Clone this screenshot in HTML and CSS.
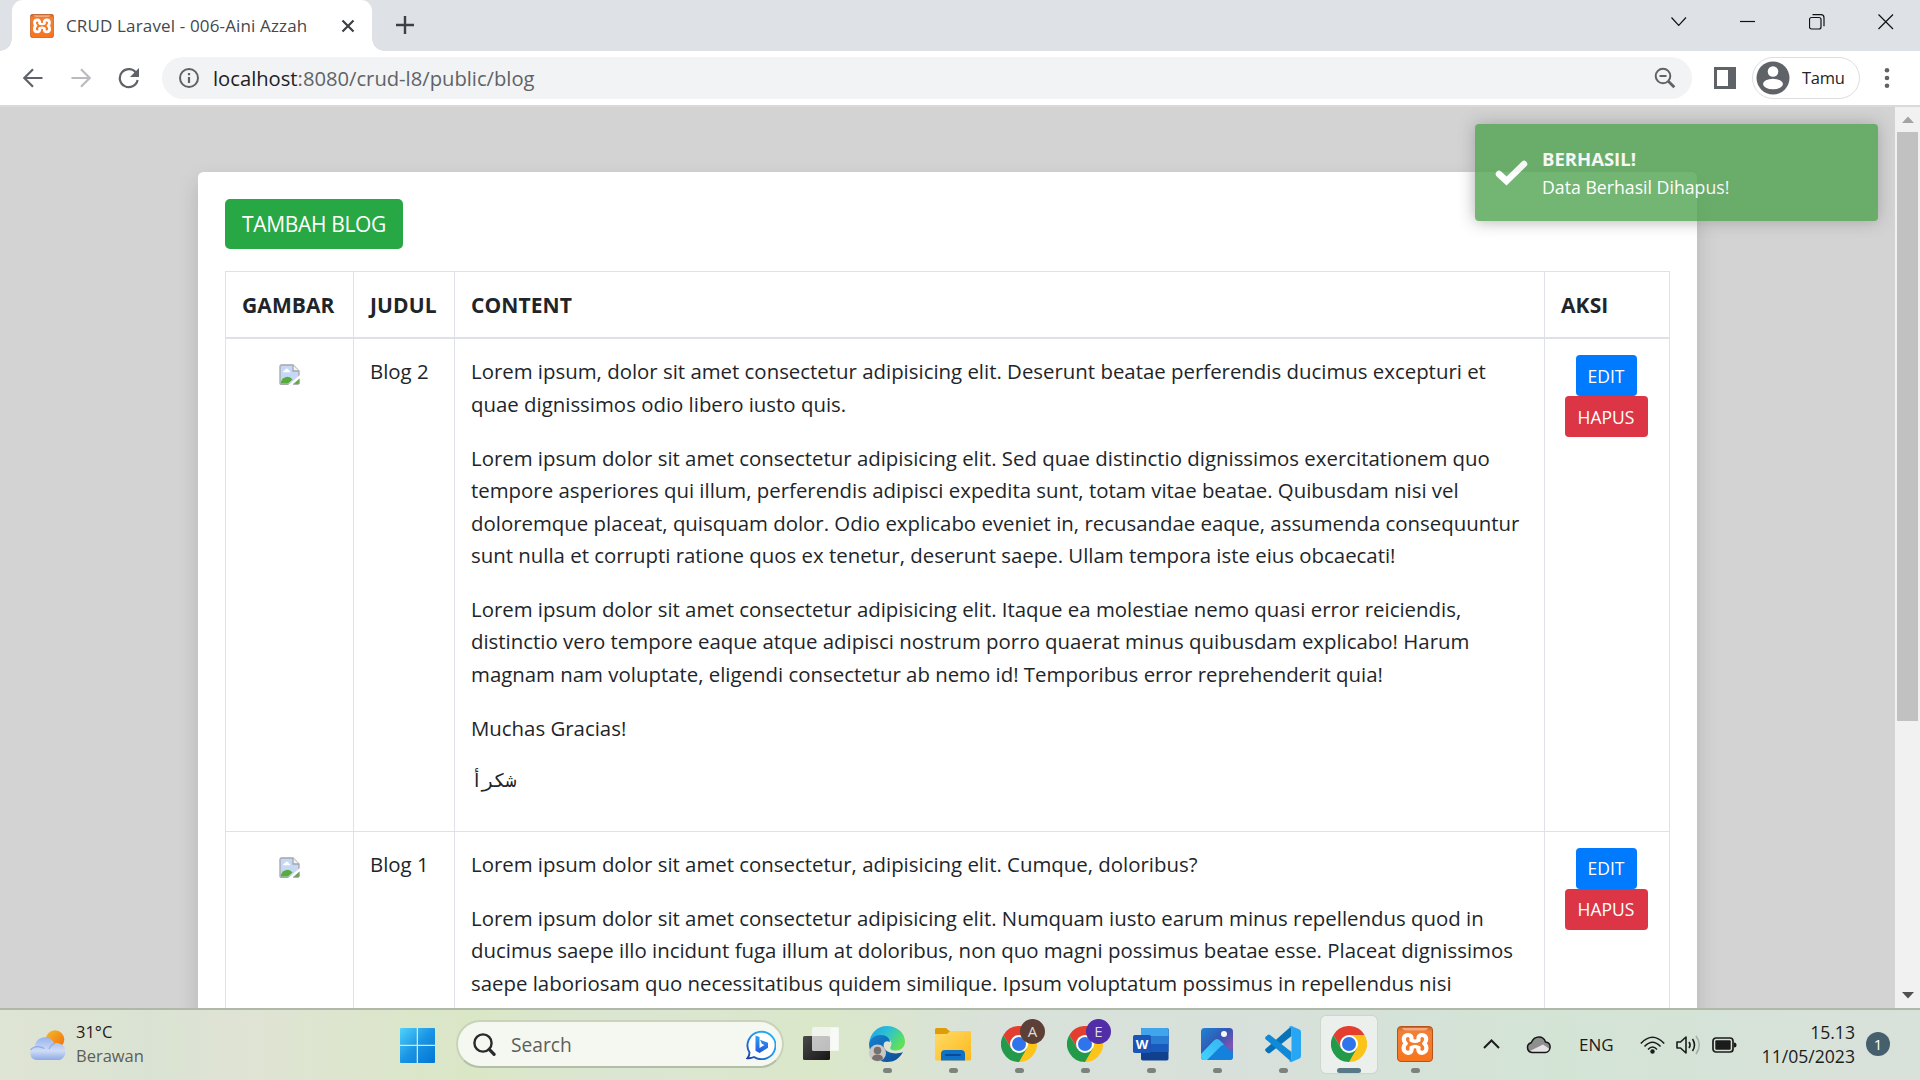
FILE: index.html
```html
<!DOCTYPE html>
<html lang="id">
<head>
<meta charset="utf-8">
<title>CRUD Laravel - 006-Aini Azzah</title>
<link rel="stylesheet" href="styles.css">
</head>
<body>
<svg class="defs" aria-hidden="true">
  <defs>
    <linearGradient id="orange" x1="0" y1="0" x2="0" y2="1"><stop offset="0" stop-color="#c8622a"/><stop offset=".15" stop-color="#f08039"/><stop offset="1" stop-color="#f9741c"/></linearGradient>
    <linearGradient id="win" x1="0" y1="0" x2="1" y2="1"><stop offset="0" stop-color="#4fd3fc"/><stop offset=".5" stop-color="#1a94e4"/><stop offset="1" stop-color="#0076d6"/></linearGradient>
    <linearGradient id="sun" x1="0" y1="0" x2="1" y2="1"><stop offset="0" stop-color="#f5bb2c"/><stop offset="1" stop-color="#f26a0c"/></linearGradient>
    <linearGradient id="cloud" x1="0" y1="0" x2="0" y2="1"><stop offset="0" stop-color="#96b4ee"/><stop offset=".6" stop-color="#cfdcf4"/><stop offset="1" stop-color="#8caae8"/></linearGradient>
    <linearGradient id="bing" x1="1" y1="0" x2="0" y2="1"><stop offset="0" stop-color="#1fb6f2"/><stop offset=".5" stop-color="#2490ee"/><stop offset="1" stop-color="#173ca8"/></linearGradient>
    <linearGradient id="bingB" x1="0" y1="0" x2="0" y2="1"><stop offset="0" stop-color="#2fa5f5"/><stop offset="1" stop-color="#2258dc"/></linearGradient>
    <linearGradient id="dark" x1="0" y1="0" x2="1" y2="1"><stop offset="0" stop-color="#4a4a4a"/><stop offset="1" stop-color="#161616"/></linearGradient>
    <linearGradient id="edgeTop" x1="0" y1="0" x2="1" y2=".5"><stop offset="0" stop-color="#1b9de2"/><stop offset=".5" stop-color="#2cc0d6"/><stop offset="1" stop-color="#5fe05a"/></linearGradient>
    <linearGradient id="edgeLow" x1="0" y1="0" x2="1" y2="1"><stop offset="0" stop-color="#1482d0"/><stop offset="1" stop-color="#0e4b93"/></linearGradient>
    <linearGradient id="folder" x1="0" y1="0" x2="1" y2="1"><stop offset="0" stop-color="#ffdb67"/><stop offset="1" stop-color="#fdb81a"/></linearGradient>
    <linearGradient id="photo" x1="0" y1="0" x2="1" y2="1"><stop offset="0" stop-color="#1d84d8"/><stop offset=".45" stop-color="#3457b0"/><stop offset=".75" stop-color="#8252b4"/><stop offset="1" stop-color="#1c6fc8"/></linearGradient>
    <linearGradient id="hill" x1="1" y1="0" x2="0" y2="1"><stop offset="0" stop-color="#36b3f2"/><stop offset="1" stop-color="#43d4fc"/></linearGradient>
    <symbol id="xampp" viewBox="0 0 36 36">
      <rect x=".5" y=".5" width="35" height="35" rx="3.500" fill="url(#orange)" stroke="#b4541c"/>
      <path d="M5 2h26q-1 2.600-4 2.600h-18q-3 0-4-2.600z" fill="#f7a878"/>
      <g fill="none" stroke="#fff" stroke-width="4.200" stroke-linecap="round" stroke-linejoin="round">
        <path d="M14.500 14c.8-3-1-5-3.500-5s-4.200 2-4.200 4.300c0 2 .8 3.200 2 4.200-1.400 1.200-2.200 2.500-2.200 4.500 0 2.800 1.800 4.800 4.400 4.800 2.800 0 4.200-2 3.500-5"/>
        <path d="M21.500 14c-.8-3 1-5 3.500-5s4.200 2 4.200 4.300c0 2-.8 3.200-2 4.200 1.400 1.200 2.200 2.500 2.200 4.500 0 2.800-1.800 4.800-4.400 4.800-2.800 0-4.200-2-3.500-5"/>
        <path d="M14.500 14q3.500 2.500 7 0M14.500 21.800q3.500-2.500 7 0"  stroke-width="3.400"/>
      </g>
    </symbol>
    <symbol id="chrome" viewBox="0 0 36 36">
      <path d="M18 18V9h15.600A18 18 0 0 1 18 36z" fill="#fcc419"/>
      <path d="M18 9h15.600a18 18 0 0 0-31.200 0L10.200 22.500z" fill="#e43e2f"/>
      <path d="M10.200 22.500L2.400 9A18 18 0 0 0 18 36l7.800-13.500z" fill="#23994a"/>
      <circle cx="18" cy="18" r="9" fill="#fff"/><circle cx="18" cy="18" r="7" fill="#2f74ea"/>
    </symbol>
    <symbol id="broken" viewBox="0 0 21 21">
      <path d="M2.500 1h11.500l6 6v6.500L10 20.400H2.500q-1.500 0-1.500-1.500V2.500q0-1.500 1.500-1.500z" fill="#c6d8f5" stroke="#a4a6a8" stroke-width="1.300"/>
      <path d="M14 1v6h6" fill="#f4f4f4" stroke="#a4a6a8" stroke-width="1.300"/>
      <path d="M4 8.200q0-2 2-2 .6-2 2.400-1.500Q10 5.200 9.800 6.600q1.500 0 1.500 1.600z" fill="#fff"/>
      <path d="M1.800 19.600q0-4.600 4.600-6.400 4.400-1.400 7.200 2.400L9 19.600z" fill="#58ac3c"/>
      <path d="M20.900 11L9 21h4l8-6.800z" fill="#fff"/>
      <path d="M20.300 15v4q0 1.300-1.300 1.300h-4.800z" fill="#58ac3c" stroke="#a4a6a8"/>
    </symbol>
  </defs>
</svg>

<header class="tabstrip">
  <div class="tab">
    <svg class="favicon" width="24" height="24"><use href="#xampp"/></svg>
    <span class="tab-title">CRUD Laravel - 006-Aini Azzah</span>
    <svg class="tab-close" width="14" height="14" viewBox="0 0 14 14"><path d="M1.500 1.500l11 11M12.500 1.500l-11 11" stroke="#3c4043" stroke-width="2.200"/></svg>
  </div>
  <svg class="newtab" width="18" height="18" viewBox="0 0 18 18"><path d="M9 0v18M0 9h18" stroke="#3c4043" stroke-width="2.400"/></svg>
  <div class="window-controls">
    <svg width="16" height="16" viewBox="0 0 16 16"><path d="M.5 3.500l7.200 7.800L15 3.500"/></svg>
    <svg width="16" height="16" viewBox="0 0 16 16"><path d="M0 7.500h15"/></svg>
    <svg width="16" height="16" viewBox="0 0 16 16"><rect x=".5" y="3.500" width="11.500" height="11.500" rx="2"/><path d="M3.500.7h8.500q3 0 3 3v8.500"/></svg>
    <svg width="16" height="16" viewBox="0 0 16 16"><path d="M.5.5l14.500 14.500M15 .5L.5 15"/></svg>
  </div>
</header>

<nav class="toolbar">
  <svg class="nav-icon" width="22" height="22" viewBox="0 0 22 22"><path d="M20.500 11H3M11 2.300L2.300 11l8.700 8.700" stroke="#5f6368"/></svg>
  <svg class="nav-icon" width="22" height="22" viewBox="0 0 22 22"><path d="M1.500 11H19M11 2.300l8.700 8.700-8.700 8.700" stroke="#b9bbbe"/></svg>
  <svg class="nav-icon reload" width="22" height="22" viewBox="0 0 22 22"><path d="M18.400 6.300A9 9 0 1 0 19.600 13" stroke="#5f6368"/><path d="M21 1v9h-9z" fill="#5f6368"/></svg>
  <div class="address">
    <svg width="22" height="22" viewBox="0 0 22 22"><circle cx="11" cy="11" r="9" fill="none" stroke="#5f6368" stroke-width="2"/><path d="M11 10v6M11 6v2.200" stroke="#5f6368" stroke-width="2.200"/></svg>
    <span class="url"><b>localhost</b>:8080/crud-l8/public/blog</span>
    <svg class="zoom-out" width="22" height="22" viewBox="0 0 22 22"><g fill="none" stroke="#5f6368" stroke-width="2"><circle cx="9" cy="9" r="7.300"/><path d="M5.500 9h7"/><path d="M14.300 14.300l6 6" stroke-width="2.800"/></g></svg>
  </div>
  <svg class="sidepanel" width="22" height="22" viewBox="0 0 22 22"><path fill="#5f6368" fill-rule="evenodd" d="M0 0h22v22H0zM3 3v16h11V3z"/></svg>
  <div class="profile">
    <svg width="34" height="34" viewBox="0 0 34 34"><circle cx="17" cy="17" r="16.500" fill="#5f6368"/><circle cx="17" cy="10.500" r="5.300" fill="#fff"/><ellipse cx="17" cy="23" rx="10" ry="5.300" fill="#fff"/></svg>
    <span>Tamu</span>
  </div>
  <svg class="menu" width="6" height="22" viewBox="0 0 6 22" fill="#5f6368"><circle cx="3" cy="3.300" r="2.300"/><circle cx="3" cy="11" r="2.300"/><circle cx="3" cy="18.700" r="2.300"/></svg>
</nav>

<div class="viewport">
  <main class="page">
    <section class="card">
      <a class="btn btn-add">TAMBAH BLOG</a>
      <table class="posts">
        <colgroup><col class="c-img"><col class="c-title"><col class="c-content"><col class="c-act"></colgroup>
        <thead><tr><th>GAMBAR</th><th>JUDUL</th><th>CONTENT</th><th>AKSI</th></tr></thead>
        <tbody>
          <tr>
            <td class="center"><svg class="thumb" width="21" height="21"><use href="#broken"/></svg></td>
            <td>Blog 2</td>
            <td>
              <p>Lorem ipsum, dolor sit amet consectetur adipisicing elit. Deserunt beatae perferendis ducimus excepturi et<br>quae dignissimos odio libero iusto quis.</p>
              <p>Lorem ipsum dolor sit amet consectetur adipisicing elit. Sed quae distinctio dignissimos exercitationem quo<br>tempore asperiores qui illum, perferendis adipisci expedita sunt, totam vitae beatae. Quibusdam nisi vel<br>doloremque placeat, quisquam dolor. Odio explicabo eveniet in, recusandae eaque, assumenda consequuntur<br>sunt nulla et corrupti ratione quos ex tenetur, deserunt saepe. Ullam tempora iste eius obcaecati!</p>
              <p>Lorem ipsum dolor sit amet consectetur adipisicing elit. Itaque ea molestiae nemo quasi error reiciendis,<br>distinctio vero tempore eaque atque adipisci nostrum porro quaerat minus quibusdam explicabo! Harum<br>magnam nam voluptate, eligendi consectetur ab nemo id! Temporibus error reprehenderit quia!</p>
              <p>Muchas Gracias!</p>
              <pre lang="ar">شكرأ</pre>
            </td>
            <td class="center actions"><a class="btn btn-edit">EDIT</a><br><a class="btn btn-delete">HAPUS</a></td>
          </tr>
          <tr>
            <td class="center"><svg class="thumb" width="21" height="21"><use href="#broken"/></svg></td>
            <td>Blog 1</td>
            <td>
              <p>Lorem ipsum dolor sit amet consectetur, adipisicing elit. Cumque, doloribus?</p>
              <p>Lorem ipsum dolor sit amet consectetur adipisicing elit. Numquam iusto earum minus repellendus quod in<br>ducimus saepe illo incidunt fuga illum at doloribus, non quo magni possimus beatae esse. Placeat dignissimos<br>saepe laboriosam quo necessitatibus quidem similique. Ipsum voluptatum possimus in repellendus nisi</p>
            </td>
            <td class="center actions"><a class="btn btn-edit">EDIT</a><br><a class="btn btn-delete">HAPUS</a></td>
          </tr>
        </tbody>
      </table>
    </section>
    <aside class="toast">
      <svg width="33" height="26" viewBox="0 0 33 26"><path d="M4 14l7.500 7L29 4" fill="none" stroke="#fff" stroke-width="6.500" stroke-linecap="round"/></svg>
      <div><strong>BERHASIL!</strong><span>Data Berhasil Dihapus!</span></div>
    </aside>
  </main>
  <div class="scrollbar">
    <svg width="12" height="7" viewBox="0 0 12 7"><path d="M0 7l6-6.500L12 7z" fill="#a3a3a3"/></svg>
    <div class="thumb-bar"></div>
    <svg class="down" width="12" height="7" viewBox="0 0 12 7"><path d="M0 0l6 6.500L12 0z" fill="#505050"/></svg>
  </div>
</div>

<footer class="taskbar">
  <div class="weather">
    <svg width="37" height="31" viewBox="0 0 37 31"><circle cx="26" cy="9.500" r="9.300" fill="url(#sun)"/><path d="M7 30a7 7 0 0 1-1-13.500C6 11 10.500 7.200 16 7.200c4 0 7.500 2 9 6 6-1.500 11.500 2.500 11.500 8.500 0 4.500-3 8.300-7.500 8.300z" fill="url(#cloud)"/><path d="M1.500 20q5-6 14-1.500M20 19q2-4.500 6-5.500" fill="none" stroke="#7698e4" stroke-width="1.200" opacity=".7"/></svg>
    <div><span>31°C</span><span class="muted">Berawan</span></div>
  </div>
  <svg class="start" width="35" height="35" viewBox="0 0 35 35"><path d="M0 1q0-1 1-1h15.700v16.700H0zM18 0h16q1 0 1 1v15.700H18zM0 18h16.700v17H1q-1 0-1-1zM18 18h17v16q0 1-1 1H18z" fill="url(#win)"/></svg>
  <div class="search">
    <svg width="23" height="23" viewBox="0 0 23 23"><g fill="none" stroke="#2a2a2a" stroke-linecap="round"><circle cx="10" cy="10" r="8.600" stroke-width="2.400"/><path d="M16.300 16.300l4.800 5" stroke-width="3.200"/></g></svg>
    <span>Search</span>
    <svg class="bing" width="30" height="31" viewBox="0 0 30 31"><path d="M3.500 23.500A14 13.700 0 1 1 8 28q-3 1.500-6.500 1.200 2-2 2-5.700z" fill="#fff" stroke="url(#bing)" stroke-width="1.900"/><path d="M9.500 6.500l4 1.500v11l5-3-2.700-1.200-1.800-4 8 2.900v5L13.500 24l-4-2.200z" fill="url(#bingB)"/></svg>
  </div>
  <div class="apps">
    <div class="app"><svg width="36" height="36" viewBox="0 0 36 36"><rect y="10" width="27" height="24" rx="1.500" fill="url(#dark)"/><rect x="9" y="1" width="27" height="24" rx="1.500" fill="#fafafa" opacity=".72"/><rect x="27.500" y="1.500" width="8" height="23" fill="#fff" opacity=".5"/></svg></div>
    <div class="app run"><svg width="36" height="36" viewBox="0 0 36 36"><path d="M0 18C1 7 8.500 0 18 0c10 0 18 7 18 15.500 0 6-4.500 9-9.500 9-4 0-6-1.500-5-3.500 3-5-1-8.500-6-9C8 11.500 2 14 0 18z" fill="url(#edgeTop)"/><path d="M0 18c1.500-6 6-9 11.500-9 6 0 9.500 3.500 9.500 7-5-2.500-8 2-5.500 6.500s11.500 6.500 18.500 3.500C30 33 25 36 18 36 8 36 0 28 0 18z" fill="url(#edgeLow)"/><circle cx="8.500" cy="27" r="8.500" fill="#c9c6c4"/><circle cx="8.500" cy="24.500" r="3.800" fill="#78706c"/><path d="M3 33q0-4.500 5.500-4.500T14 33q-5.500 4-11 0z" fill="#78706c"/></svg></div>
    <div class="app run"><svg width="36" height="36" viewBox="0 0 36 36"><path d="M0 3.500Q0 2 1.500 2H11l4 3.500V10H0z" fill="#dd9c08"/><path d="M0 8h12l3.500-3H34.500Q36 5 36 6.500V33q0 1.500-1.500 1.500h-33Q0 34.500 0 33z" fill="url(#folder)"/><path d="M6 34.500V28q0-4 4-4h16q4 0 4 4v6.500z" fill="#0f71c8"/><path d="M11 29h14" stroke="#0a4a8e" stroke-width="1.800" stroke-linecap="round"/></svg></div>
    <div class="app run"><svg width="36" height="36"><use href="#chrome"/></svg><i class="who who-a">A</i></div>
    <div class="app run"><svg width="36" height="36"><use href="#chrome"/></svg><i class="who who-e">E</i></div>
    <div class="app run word"><svg width="36" height="36" viewBox="0 0 36 36"><rect x="8" y="2" width="27.500" height="32.500" rx="1.800" fill="#10408e"/><path d="M8 26V3.800Q8 2 9.800 2h24q1.700 0 1.700 1.800V26z" fill="#185abd"/><path d="M8 18V3.800Q8 2 9.800 2h24q1.700 0 1.700 1.800V18z" fill="#2b7cd3"/><path d="M8 10V3.800Q8 2 9.800 2h24q1.700 0 1.700 1.800V10z" fill="#41a5ee"/><rect y="9" width="18" height="18" rx="1.800" fill="#1a55b8"/></svg><b>W</b></div>
    <div class="app run"><svg width="36" height="36" viewBox="0 0 36 36"><rect x="2" y="2" width="32" height="32" rx="3.500" fill="url(#photo)"/><path d="M2 31V28L15 14.500q3-3 6 0L34 27v3.500q0 3.500-3.500 3.500h-25Q3 34 2 31z" fill="#1482dc"/><path d="M2 28L15 14.500q3-3 6 0L25 18.500 22 20 8 34H5.500Q2 34 2 30.500z" fill="url(#hill)"/><circle cx="25" cy="8" r="3" fill="#f5f7fb"/></svg></div>
    <div class="app run"><svg width="36" height="36" viewBox="0 0 36 36"><path d="M26.500 0v10L5 27q-1.200.8-2.300 0l-2-1.800q-1.200-1.200 0-2.400z" fill="#0872b8"/><path d="M26.500 36V26L5 9q-1.200-.8-2.300 0l-2 1.800q-1.200 1.200 0 2.400z" fill="#1089d6"/><path d="M26.500 0L34.500 3.500Q36 4.200 36 6v24q0 1.800-1.500 2.500L26.500 36q-1.500 0-2.500-1l2.500-2V3L24 1q1-1 2.500-1z" fill="#27a6f3"/></svg></div>
    <div class="app run active"><svg width="36" height="36"><use href="#chrome"/></svg></div>
    <div class="app run"><svg width="36" height="36"><use href="#xampp"/></svg></div>
  </div>
  <div class="tray">
    <svg class="t-up" width="17" height="10" viewBox="0 0 17 10"><path d="M1 9l7.500-7.500L16 9" fill="none" stroke="#1c1c1c" stroke-width="2"/></svg>
    <svg class="t-cloud" width="25" height="18" viewBox="0 0 25 18"><path d="M6 16.500A5 5 0 0 1 5.200 6.700C7 2.500 10 1 13 1c3.500 0 5.500 2 6.500 5 3 .3 4.600 2.500 4.600 5 0 3-2 5.500-5 5.500z" fill="#8e9090"/><path d="M3 15.500L17 8.500l6.500 4.500q-1 3.500-4.500 3.500H6q-2 0-3-1z" fill="#e4e4e6"/><path d="M6 16.500A5 5 0 0 1 5.200 6.700C7 2.500 10 1 13 1c3.500 0 5.500 2 6.500 5 3 .3 4.600 2.500 4.600 5 0 3-2 5.500-5 5.500z" fill="none" stroke="#161616" stroke-width="1.500"/></svg>
    <span class="lang">ENG</span>
    <svg class="t-wifi" width="25" height="18" viewBox="0 0 25 18"><g fill="none" stroke="#1c1c1c" stroke-width="1.600"><path d="M.8 7.500Q12.500-5 24.200 7.500M4.500 10.500q8-8.500 16 0M8 13.500q4.500-5 9 0"/></g><circle cx="12.500" cy="15.500" r="2.200" fill="#1c1c1c"/></svg>
    <svg class="t-vol" width="25" height="20" viewBox="0 0 25 20"><g fill="none" stroke="#1c1c1c" stroke-width="1.600" stroke-linejoin="round"><path d="M1 7h3.500L10 2v16l-5.500-5H1z"/><path d="M13 7q2.200 3 0 6M16.500 4q4 6 0 12"/><path d="M20 1q6.500 9 0 18" stroke="#a5afa7"/></g></svg>
    <svg class="t-bat" width="25" height="16" viewBox="0 0 25 16"><rect x="1" y="1" width="20" height="14" rx="3" fill="none" stroke="#1c1c1c" stroke-width="1.700"/><rect x="3.300" y="3.300" width="15.400" height="9.400" rx="1" fill="#1c1c1c"/><path d="M22 5.500q2.500 0 2.500 2.500T22 10.500z" fill="#1c1c1c"/></svg>
    <div class="clock"><span>15.13</span><span>11/05/2023</span></div>
    <span class="count">1</span>
  </div>
</footer>
</body>
</html>
```
FILE: styles.css
```css
* { box-sizing: border-box; }
body {
  margin: 0;
  width: 1920px;
  height: 1080px;
  overflow: hidden;
  display: flex;
  flex-direction: column;
  font-family: "Open Sans", "Noto Sans", sans-serif;
  color: #212529;
}
svg { display: block; flex: none; }
.defs { position: absolute; width: 0; height: 0; }

/* browser chrome */
.tabstrip {
  height: 51px;
  flex: none;
  display: flex;
  background: #dee1e6;
  padding-left: 12px;
}
.tab {
  position: relative;
  width: 360px;
  display: flex;
  align-items: center;
  background: #fff;
  border-radius: 11px 11px 0 0;
  padding: 0 17px 0 18px;
}
.tab::before, .tab::after {
  content: "";
  position: absolute;
  bottom: 0;
  width: 12px;
  height: 12px;
}
.tab::before { left: -12px; background: radial-gradient(circle at 0 0, #dee1e6 11.500px, #fff 12px); }
.tab::after { right: -12px; background: radial-gradient(circle at 100% 0, #dee1e6 11.500px, #fff 12px); }
.tab-title { margin-left: 12px; font-size: 17px; letter-spacing: 0.15px; color: #45484d; white-space: nowrap; }
.tab-close { margin-left: auto; }
.newtab { margin: 16px 0 0 24px; }
.window-controls {
  margin-left: auto;
  display: flex;
  gap: 53px;
  padding: 14px 26px 0 0;
  fill: none;
  stroke: #111;
  stroke-width: 1.200;
}
.toolbar {
  height: 54px;
  flex: none;
  display: flex;
  align-items: center;
  background: #fff;
  padding-left: 22px;
}
.nav-icon { fill: none; stroke-width: 2.200; margin-right: 26px; }
.nav-icon.reload { margin-right: 22px; }
.nav-icon + .nav-icon { margin-left: 0; }
.address {
  width: 1530px;
  height: 42px;
  border-radius: 21px;
  background: #f1f3f4;
  display: flex;
  align-items: center;
  padding: 0 16px 0 16px;
}
.url { margin-left: 13px; font-size: 20.200px; color: #5f6368; white-space: nowrap; }
.url b { font-weight: 400; color: #202124; }
.zoom-out { margin-left: auto; }
.sidepanel { margin-left: 22px; }
.profile {
  margin-left: 16px;
  width: 108px;
  height: 42px;
  border: 1px solid #dcdee1;
  border-radius: 21px;
  display: flex;
  align-items: center;
  padding: 0 0 1px 3px;
  font-size: 16.500px;
  letter-spacing: -0.3px;
}
.profile span { margin-left: 12px; }
.menu { margin-left: 24px; }

/* page */
.viewport {
  height: 903px;
  flex: none;
  display: flex;
  border-top: 2px solid #d9d9d9;
}
.page {
  position: relative;
  width: 1895px;
  height: 901px;
  overflow: hidden;
  background: #d3d3d3;
  padding: 65px 198px 0 198px;
}
.card {
  width: 1499px;
  height: 1000px;
  background: #fff;
  border-radius: 5.400px;
  box-shadow: 0 10.800px 21.600px rgba(0, 0, 0, .15);
  padding: 27px;
}
.btn {
  display: inline-flex;
  align-items: center;
  justify-content: center;
  color: #fff;
  vertical-align: top;
  white-space: nowrap;
}
.btn-add {
  display: flex;
  width: 178px;
  height: 50px;
  border-radius: 5px;
  background: #28a745;
  font-size: 21px;
  letter-spacing: -0.35px;
  margin-bottom: 22px;
}
.posts {
  width: 1445px;
  table-layout: fixed;
  border-collapse: collapse;
  font-size: 20.400px;
  line-height: 32.400px;
}
.c-img { width: 128px; }
.c-title { width: 101px; }
.c-act { width: 125px; }
.posts th, .posts td {
  border: 1px solid #dee2e6;
  padding: 16px;
  text-align: left;
  vertical-align: top;
  white-space: nowrap;
}
.posts th { border-bottom-width: 2px; font-weight: 700; font-size: 21px; letter-spacing: 0.1px; padding: 17px 16px 16px; }
.posts .center { text-align: center; }
.posts p { margin: 0 0 21.600px; }
.posts pre {
  margin: 0 0 21px;
  font-family: "DejaVu Sans Mono", "Liberation Mono", monospace;
  font-size: 18.900px;
  line-height: 28px;
}
.thumb { margin: 9px auto 0; }
.posts td.actions { line-height: 0; padding-right: 18px; }
.btn-edit, .btn-delete {
  height: 41px;
  border-radius: 4px;
  font-size: 17.500px;
  line-height: 26px;
}
.btn-edit { width: 61px; background: #007bff; }
.btn-delete { width: 83px; background: #dc3545; }

.toast {
  position: absolute;
  left: 1475px;
  top: 17px;
  width: 403px;
  height: 97px;
  border-radius: 4px;
  background: #51a351;
  opacity: .8;
  box-shadow: 0 0 16px #999;
  color: #fff;
  display: flex;
  align-items: center;
  padding-left: 20px;
}
.toast div { margin-left: 14px; display: flex; flex-direction: column; font-size: 17.700px; line-height: 29px; white-space: nowrap; }
.toast strong { font-size: 18.500px; }

.scrollbar {
  width: 25px;
  background: #f1f1f1;
  display: flex;
  flex-direction: column;
  align-items: center;
  padding: 9px 0;
}
.thumb-bar { width: 21px; height: 589px; margin-top: 9px; background: #c1c1c1; }
.down { margin-top: auto; }

/* taskbar */
.taskbar {
  height: 72px;
  flex: none;
  display: flex;
  align-items: center;
  border-top: 2px solid #b0b8aa;
  background: linear-gradient(90deg, #dfe4d4 0, #dae3d3 150px, #dfe3d5 230px, #dae7c6 470px, #dae6d2 620px, #dbe7c9 820px, #d9e1da 1000px, #d8e0db 1230px, #d3e4d5 1560px, #d9e1da 1920px);
}
.weather { width: 371px; margin-left: 29px; display: flex; align-items: center; }
.weather div, .clock { display: flex; flex-direction: column; font-size: 16.500px; line-height: 24px; color: #1c1c1c; }
.weather div { margin-left: 10px; margin-top: -2px; }
.weather .muted { color: #5c5f58; }
.search {
  width: 328px;
  height: 48px;
  margin-left: 21px;
  margin-top: -2px;
  border: 2px solid #c9d3b9;
  border-bottom-color: #b3bea6;
  border-radius: 24px;
  background: #f5f8f1;
  display: flex;
  align-items: center;
  padding: 0 6px 0 15px;
  font-size: 19.200px;
  color: #5c5f58;
}
.search span { margin-left: 15px; }
.bing { margin-left: auto; }
.apps { display: flex; height: 70px; margin-left: 4px; }
.app {
  position: relative;
  width: 66px;
  display: flex;
  justify-content: center;
  padding-top: 16px;
}
.app svg { position: relative; }
.run::after {
  content: "";
  position: absolute;
  left: 29px;
  top: 58px;
  width: 9px;
  height: 5px;
  border-radius: 2.500px;
  background: #7d827c;
}
.active::before {
  content: "";
  position: absolute;
  left: 5px;
  top: 6px;
  width: 56px;
  height: 57px;
  border-radius: 5px;
  background: #ebf0ed;
  box-shadow: 0 0 1px 1px #ccd5ce;
}
.active::after { left: 21px; width: 24px; background: #587a86; }
.who {
  position: absolute;
  left: 34px;
  top: 9px;
  width: 25px;
  height: 25px;
  border-radius: 50%;
  color: #ddd;
  font: 400 15px/25px "Open Sans", sans-serif;
  text-align: center;
}
.who-a { background: #5c4037; }
.who-e { background: #512da8; }
.word b { position: absolute; left: 15px; top: 25px; width: 18px; line-height: 18px; font-size: 13px; text-align: center; color: #fff; }
.tray { display: flex; align-items: center; margin-left: 35px; color: #1c1c1c; }
.t-up { margin-top: -3px; }
.t-cloud { margin-left: 26px; }
.lang { margin-left: 28px; width: 36px; font-size: 17px; margin-top: -1px; }
.t-wifi { margin-left: 25px; }
.t-vol { margin-left: 11px; }
.t-bat { margin-left: 11px; }
.clock { width: 110px; margin-left: 8px; align-items: flex-end; margin-top: -2px; font-size: 17.600px; }
.count {
  width: 24px;
  height: 24px;
  margin-left: 11px;
  border-radius: 50%;
  background: #455f6c;
  color: #fff;
  font-size: 15px;
  line-height: 24px;
  text-align: center;
  margin-top: -2px;
}
```
